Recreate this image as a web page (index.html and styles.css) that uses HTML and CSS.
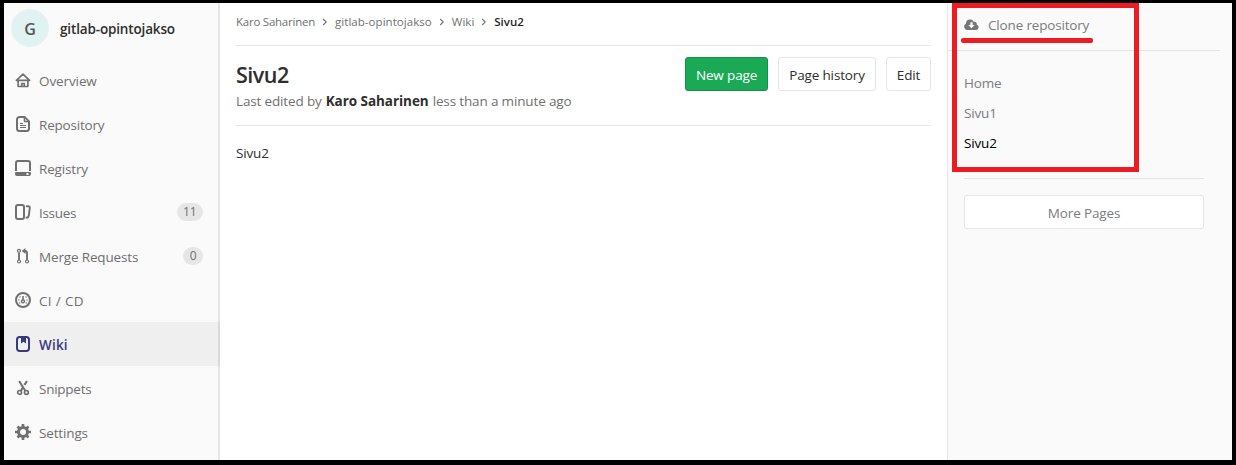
FILE: index.html
```html
<!DOCTYPE html>
<html lang="en">
<head>
<meta charset="utf-8">
<title>Sivu2 · Wiki · gitlab-opintojakso</title>
<link rel="stylesheet" href="styles.css">
</head>
<body>
<div class="frame">
  <nav class="sidebar">
    <a class="project"><span class="avatar">G</span><span class="project-name">gitlab-opintojakso</span></a>
    <a class="item"><svg class="icon" viewBox="0 0 16 16"><path d="M1.400 8.300 8 2.100l6.600 6.200M3.100 7.500V14q0 .5.500.5h8.800q.5 0 .5-.5V7.500M2 8.300h12M6.700 14.500v-3h2.600v3" fill="none" stroke="currentColor" stroke-width="1.700" stroke-linecap="round" stroke-linejoin="round"/></svg><span class="label overview">Overview</span></a>
    <a class="item"><svg class="icon" viewBox="0 0 16 16"><path d="M4.500 1h5L14 5.500V12.500A2.500 2.500 0 0 1 11.500 15h-7A2.500 2.500 0 0 1 2 12.500v-9A2.500 2.500 0 0 1 4.500 1z" fill="none" stroke="currentColor" stroke-width="2"/><path d="M8.700 1v4.200q0 1 1 1H14z" fill="currentColor"/><path d="M10.200 2.700v2.100h2.100z" fill="#fafafa"/><path d="M5 7.500h3M5 9.500h6M5 11.500h6" stroke="currentColor"/></svg><span class="label repository">Repository</span></a>
    <a class="item"><svg class="icon" viewBox="0 0 16 16"><path d="M1 11V3q0-2 2-2h10q2 0 2 2v8" fill="none" stroke="currentColor" stroke-width="2"/><path fill-rule="evenodd" d="M1.500 12h13q1.500 0 1.500 1v1q0 2-2 2H2q-2 0-2-2v-1q0-1 1.500-1zm10 1v2h2v-2z" fill="currentColor"/></svg><span class="label registry">Registry</span></a>
    <a class="item"><svg class="icon" viewBox="0 0 16 16"><rect x="1" y="1" width="8" height="14" rx="2" fill="none" stroke="currentColor" stroke-width="2"/><path d="M11.700 2.200h1.500q1.800 0 1.600 1.800l-1 7.500q-.3 2-2.300 2.300" fill="none" stroke="currentColor" stroke-width="1.900" stroke-linecap="round"/></svg><span class="label issues">Issues</span><span class="badge">11</span></a>
    <a class="item"><svg class="icon" viewBox="0 0 16 16"><g fill="none" stroke="currentColor"><path d="M4 5v7M12 12V5q0-2-2-2H9.500" stroke-width="1.900"/><circle cx="4" cy="2.800" r="1.500" stroke-width="1.200"/><circle cx="4" cy="13.500" r="1.500" stroke-width="1.200"/><circle cx="12" cy="13.500" r="1.500" stroke-width="1.200"/></g><path d="M10.500 0v6L6.700 3z" fill="currentColor"/></svg><span class="label merge">Merge Requests</span><span class="badge">0</span></a>
    <a class="item"><svg class="icon" viewBox="0 0 16 16"><circle cx="8" cy="8" r="7" fill="none" stroke="currentColor" stroke-width="2"/><path fill-rule="evenodd" d="M7.200 4h1.600v3.200a2.200 2.200 0 1 1-1.600 0zM8 8.500a.8.800 0 1 0 0 1.600.8.800 0 0 0 0-1.600z" fill="currentColor"/><g fill="currentColor"><circle cx="5" cy="5" r=".7"/><circle cx="11" cy="5" r=".7"/><circle cx="3.900" cy="8" r=".7"/><circle cx="12.100" cy="8" r=".7"/><circle cx="4.800" cy="11" r=".7"/><circle cx="11.200" cy="11" r=".7"/></g></svg><span class="label cicd">CI / CD</span></a>
    <a class="item active"><svg class="icon" viewBox="0 0 16 16"><rect x="2" y="1" width="12" height="14" rx="2.700" fill="none" stroke="currentColor" stroke-width="2"/><path d="M6 1h5v6.500L8.500 5.800 6 7.500z" fill="currentColor"/></svg><span class="label wiki">Wiki</span></a>
    <a class="item"><svg class="icon" viewBox="0 0 16 16"><g fill="none" stroke="currentColor"><path d="m4.100 1 6.300 10M11.900 1 9.500 5M7.700 7.800 5.800 11" stroke-width="2.100"/><circle cx="4.600" cy="12.400" r="1.900" stroke-width="1.700"/><circle cx="11.400" cy="12.400" r="1.900" stroke-width="1.700"/></g></svg><span class="label snippets">Snippets</span></a>
    <a class="item"><svg class="icon" viewBox="0 0 16 16"><circle cx="8" cy="8" r="4.500" fill="none" stroke="currentColor" stroke-width="3"/><path d="M8 0v3M8 13v3M0 8h3M13 8h3M2.500 2.500l2 2M11.500 11.500l2 2M2.500 13.500l2-2M11.500 4.500l2-2" stroke="currentColor" stroke-width="2.700"/></svg><span class="label settings">Settings</span></a>
  </nav>
  <main class="content">
    <div class="breadcrumbs">
      <span class="crumb owner">Karo Saharinen</span><svg class="chevron" viewBox="0 0 6 8"><path d="m1.200 1 3 3-3 3"/></svg>
      <span class="crumb repo">gitlab-opintojakso</span><svg class="chevron" viewBox="0 0 6 8"><path d="m1.200 1 3 3-3 3"/></svg>
      <span class="crumb section">Wiki</span><svg class="chevron" viewBox="0 0 6 8"><path d="m1.200 1 3 3-3 3"/></svg>
      <span class="crumb current">Sivu2</span>
    </div>
    <header class="page-header">
      <div class="heading">
        <h1 class="title">Sivu2</h1>
        <div class="edited"><span class="edited-by">Last edited by</span><strong class="editor">Karo Saharinen</strong><span class="edited-time">less than a minute ago</span></div>
      </div>
      <div class="actions">
        <button class="btn primary">New page</button>
        <button class="btn history">Page history</button>
        <button class="btn edit">Edit</button>
      </div>
    </header>
    <p class="body-text">Sivu2</p>
  </main>
  <aside class="wiki-side">
    <div class="clone"><svg class="cloud" viewBox="0 0 16 12"><path fill-rule="evenodd" d="M3.700 12A3.700 3.700 0 0 1 2 5 4.500 4.500 0 0 1 10.500 3 2.600 2.600 0 0 1 13.700 6 3.100 3.100 0 0 1 12.600 12zM6.800 3.500v3H4.600L8 10l3.400-3.500H9.200v-3z" fill="currentColor"/></svg><span class="clone-text">Clone repository</span></div>
    <div class="pages">
      <a class="page">Home</a>
      <a class="page">Sivu1</a>
      <a class="page selected">Sivu2</a>
    </div>
    <div class="more"><button class="btn more-btn">More Pages</button></div>
  </aside>
  <div class="mark-box"></div>
  <div class="mark-line"></div>
</div>
</body>
</html>
```
FILE: styles.css
```css
* { box-sizing: border-box; }
body { margin: 0; font-family: "Open Sans", "Noto Sans", sans-serif; font-size: 13.5px; letter-spacing: -.15px; color: #2e2e2e; }
.frame { position: relative; display: flex; width: 1236px; height: 465px; border: solid #000; border-width: 3px 4px 5px; background: #fff; overflow: hidden; white-space: nowrap; }
.sidebar { width: 216px; flex: none; background: #fafafa; box-shadow: inset -2px 0 0 #e5e5e5; }
.project { display: flex; align-items: center; height: 55px; padding: 0 0 5px 7px; gap: 11px; font-weight: 600; }
.avatar { width: 38px; height: 38px; border-radius: 50%; background: #e0f2f1; border: 1px solid #e8f2f2; color: #555; display: grid; place-items: center; font-size: 16px; padding-top: 2px; }
.project-name { padding-top: 2px; }
.item { display: flex; align-items: center; height: 44px; padding: 0 17px 0 11px; color: #707070; }
.icon { width: 16px; height: 16px; flex: none; margin-right: 8px; }
.label { padding-top: 2px; }
.overview { letter-spacing: -.1px; }
.repository { letter-spacing: -.2px; }
.issues { letter-spacing: -.3px; }
.cicd { letter-spacing: .35px; }
.wiki { letter-spacing: .2px; }
.snippets { letter-spacing: -.25px; }
.active { color: #393982; background: rgba(0,0,0,.045); font-weight: 600; }
.badge { margin-left: auto; height: 18px; line-height: 18px; border-radius: 9px; padding: 0 6.500px; background: #e6e6e6; font-size: 12px; }
.content { width: 727px; flex: none; padding: 0 16px; }
.breadcrumbs { display: flex; align-items: center; height: 43px; padding-bottom: 5px; border-bottom: 1px solid #e5e5e5; font-size: 11.500px; letter-spacing: 0; color: #707070; }
.chevron { width: 6px; height: 8px; margin: 1px 7px 0; fill: none; stroke: #777; stroke-width: 1.2; }
.owner { letter-spacing: -.24px; }
.repo { letter-spacing: .05px; }
.current { font-weight: 600; color: #1f1f1f; }
.page-header { display: flex; justify-content: space-between; height: 80px; border-bottom: 1px solid #e5e5e5; }
.heading { padding-top: 14px; }
.title { margin: 0; height: 30px; line-height: 30px; font-size: 21.500px; font-weight: 600; letter-spacing: -.5px; }
.edited { display: flex; gap: 4px; height: 20px; line-height: 22px; color: #707070; }
.editor { color: #2e2e2e; font-weight: 700; letter-spacing: -.05px; }
.actions { display: flex; gap: 10px; padding-top: 11px; }
.btn { display: flex; justify-content: center; align-items: center; height: 34px; padding: 2px 0 0; border: 1px solid #e5e5e5; border-radius: 3px; background: #fff; font: inherit; letter-spacing: inherit; color: #2e2e2e; }
.primary { width: 83px; background: #1aaa55; border-color: #168f48; color: #fff; }
.history { width: 98px; }
.edit { width: 45px; }
.body-text { margin: 16px 0 0; line-height: 22px; }
.wiki-side { flex: 1; border-left: 1px solid #e5e5e5; background: #fafafa; color: #7c7c7c; }
.clone { display: flex; align-items: center; width: 272px; height: 48px; padding: 0 0 5px 16px; border-bottom: 1px solid #e5e5e5; gap: 9px; }
.cloud { width: 15px; height: 11px; color: #777; }
.clone-text { padding-top: 1px; letter-spacing: -.17px; }
.pages { width: 240px; height: 128px; margin-left: 16px; padding-top: 17px; border-bottom: 1px solid #e5e5e5; }
.page { display: block; height: 30px; line-height: 30px; }
.selected { color: #000; }
.more { padding: 16px 0 0 16px; }
.more-btn { width: 240px; color: #7c7c7c; }
.mark-box { position: absolute; left: 948px; top: 0; width: 187px; height: 169px; border: 5px solid #ed1c24; }
.mark-line { position: absolute; left: 957px; top: 35px; width: 132px; height: 5px; border-radius: 2px; background: #ed1c24; }
```
